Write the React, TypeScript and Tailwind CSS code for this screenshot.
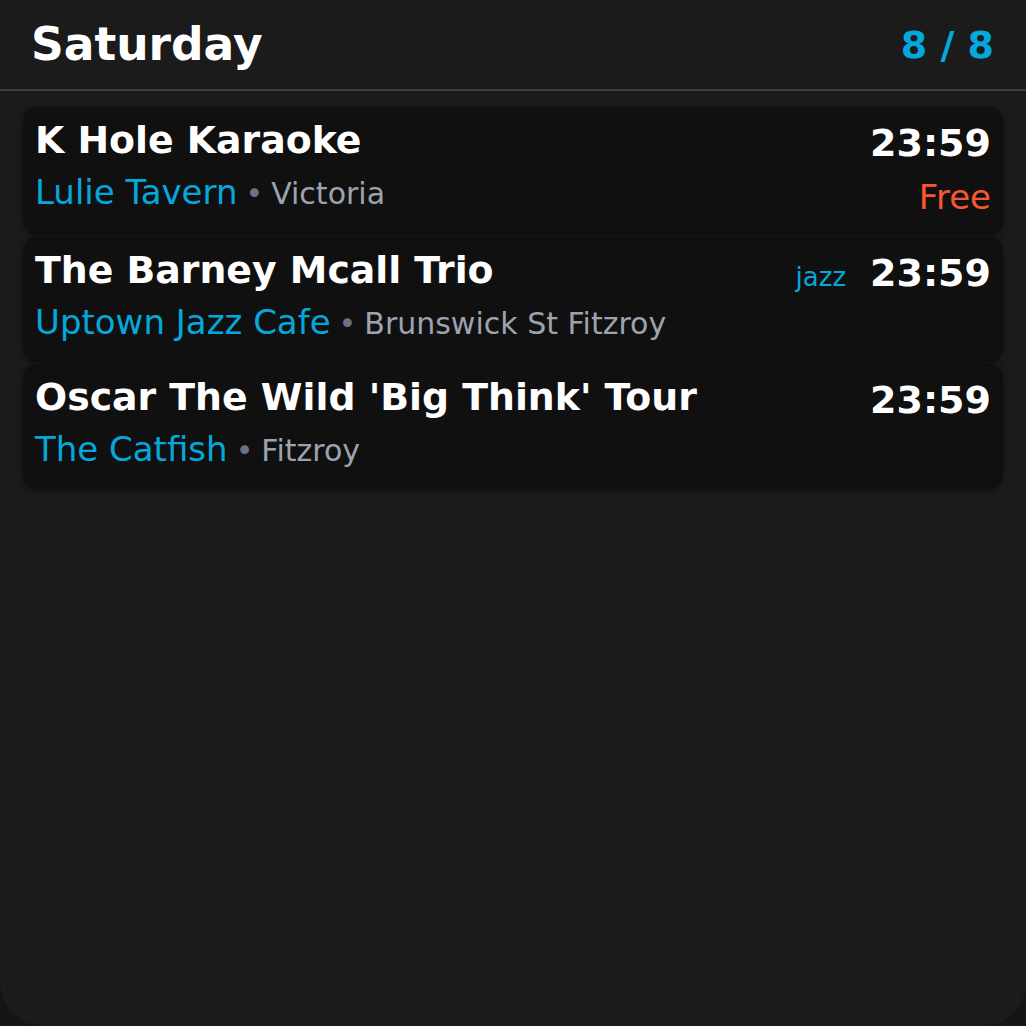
import React from 'react';

type Gig = {
  title: string;
  venue: string;
  area: string;
  time: string;
  genre?: string;
  price?: string;
};

const gigs: Gig[] = [
  { title: 'K Hole Karaoke', venue: 'Lulie Tavern', area: 'Victoria', time: '23:59', price: 'Free' },
  { title: 'The Barney Mcall Trio', venue: 'Uptown Jazz Cafe', area: 'Brunswick St Fitzroy', time: '23:59', genre: 'jazz' },
  { title: "Oscar The Wild 'Big Think' Tour", venue: 'The Catfish', area: 'Fitzroy', time: '23:59' },
];

const GigCard: React.FC<{ gig: Gig }> = ({ gig }) => (
  <div className="bg-[#101010] rounded-[14px] shadow-[0_2px_6px_rgba(0,0,0,0.35)] pl-3 pr-3 pt-3 pb-[18px] flex justify-between">
    {/* Left: title + venue */}
    <div className="flex flex-col min-w-0">
      <div className="text-[37.8px] leading-[43px] font-bold text-white whitespace-nowrap">{gig.title}</div>
      <div className="mt-[10px] leading-[40px] whitespace-nowrap flex items-baseline">
        <span className="text-[34px] text-[#05a8dc]">{gig.venue}</span>
        <span className="text-[30px] text-[#6b7280] mx-[8px]">•</span>
        <span className="text-[30px] text-[#9ca3af]">{gig.area}</span>
      </div>
    </div>

    {/* Right: genre / time / price */}
    <div className="flex flex-col items-end pt-[2px]">
      <div className="flex items-baseline gap-6 leading-[44px]">
        {gig.genre && <span className="text-[26px] text-[#05a8dc]">{gig.genre}</span>}
        <span className="text-[38px] font-bold text-white">{gig.time}</span>
      </div>
      {gig.price && (
        <div className="mt-[12px] text-[34px] leading-[40px] text-[#f9572f]">{gig.price}</div>
      )}
    </div>
  </div>
);

export default function App() {
  return (
    <div className="w-full h-[1026px] bg-[#151515]" style={{ fontFamily: '"DejaVu Sans", sans-serif' }}>
      <div className="h-full bg-[#1b1b1b] rounded-b-[44px] overflow-hidden flex flex-col">
        <div className="h-[91px] flex items-center justify-between pl-[31px] pr-[32px] border-b-2 border-[#3a3f4b]">
          <h1 className="text-[45.5px] font-bold text-white leading-none">Saturday</h1>
          <span className="text-[38px] font-bold text-[#05a8dc] leading-none">8 / 8</span>
        </div>
        <div className="px-[23px] pt-4 flex flex-col gap-[2px]">
          {gigs.map((g) => (
            <GigCard key={g.title} gig={g} />
          ))}
        </div>
      </div>
    </div>
  );
}
